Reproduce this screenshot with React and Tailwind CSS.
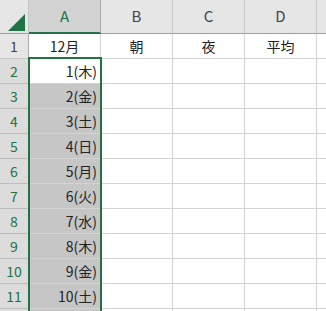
import React from "react";

const rows = [
  "1(木)", "2(金)", "3(土)", "4(日)", "5(月)", "6(火)", "7(水)", "8(木)", "9(金)", "10(土)",
];

export default function App() {
  const font = { fontFamily: '"Noto Sans CJK JP", "Noto Sans", sans-serif' };
  return (
    <div className="relative w-[326px] h-[311px] overflow-hidden bg-white text-[14px] text-[#333]" style={font}>
      {/* header row */}
      <div className="flex h-[34px]">
        <div className="w-[29px] h-[34px] bg-[#e6e6e6] border-r border-b border-r-[#c6c6c6] border-b-[#9e9e9e] relative">
          <svg className="absolute left-[8px] top-[14px]" width="17" height="17" viewBox="0 0 17 17">
            <polygon points="17,0 17,17 0,17" fill="#217346" />
          </svg>
        </div>
        <div className="w-[72px] h-[34px] bg-[#d2d2d2] border-r border-r-[#ababab] border-b-2 border-b-[#217346] flex items-center justify-center text-[#217346] text-[15px]">A</div>
        {["B", "C", "D"].map((c) => (
          <div key={c} className="w-[72px] h-[34px] bg-[#e6e6e6] border-r border-b border-r-[#c6c6c6] border-b-[#9e9e9e] flex items-center justify-center text-[#444] text-[15px]">{c}</div>
        ))}
        <div className="flex-1 h-[34px] bg-[#e6e6e6] border-b border-b-[#9e9e9e]"></div>
      </div>
      {/* row 1 */}
      <div className="flex h-[25px]">
        <div className="w-[29px] h-[25px] bg-[#e6e6e6] border-r border-b border-r-[#ababab] border-b-[#c6c6c6] flex items-center justify-center text-[#444]">1</div>
        {["12月", "朝", "夜", "平均"].map((t) => (
          <div key={t} className="w-[72px] h-[25px] border-r border-b border-[#d4d4d4] flex items-center justify-center text-[#222]">{t}</div>
        ))}
        <div className="flex-1 h-[25px] border-b border-[#d4d4d4]"></div>
      </div>
      {rows.map((r, i) => (
        <div key={r} className="flex h-[25px]">
          <div className="w-[29px] h-[25px] bg-[#dcdcdc] border-r border-b border-r-[#ababab] border-b-[#bdbdbd] flex items-center justify-center text-[#217346]">{i + 2}</div>
          <div className={`w-[72px] h-[25px] border-r border-b border-[#d4d4d4] flex items-center justify-end pr-[3px] text-[#222] ${i === 0 ? "bg-white" : "bg-[#c6c6c6]"}`}>{r}</div>
          <div className="w-[72px] h-[25px] border-r border-b border-[#d4d4d4]"></div>
          <div className="w-[72px] h-[25px] border-r border-b border-[#d4d4d4]"></div>
          <div className="w-[72px] h-[25px] border-r border-b border-[#d4d4d4]"></div>
          <div className="flex-1 h-[25px] border-b border-[#d4d4d4]"></div>
        </div>
      ))}
      {/* partially visible row 12 */}
      <div className="flex h-[25px]">
        <div className="w-[29px] h-[25px] bg-[#dcdcdc] border-r border-r-[#ababab]"></div>
        <div className="w-[72px] h-[25px] bg-[#c6c6c6] border-r border-[#d4d4d4]"></div>
        <div className="w-[72px] h-[25px] border-r border-[#d4d4d4]"></div>
        <div className="w-[72px] h-[25px] border-r border-[#d4d4d4]"></div>
        <div className="w-[72px] h-[25px] border-r border-[#d4d4d4]"></div>
        <div className="flex-1 h-[25px]"></div>
      </div>
      {/* selection box */}
      <div className="absolute left-[28px] top-[57px] w-[74px] h-[400px] border-2 border-[#217346] pointer-events-none"></div>
    </div>
  );
}
